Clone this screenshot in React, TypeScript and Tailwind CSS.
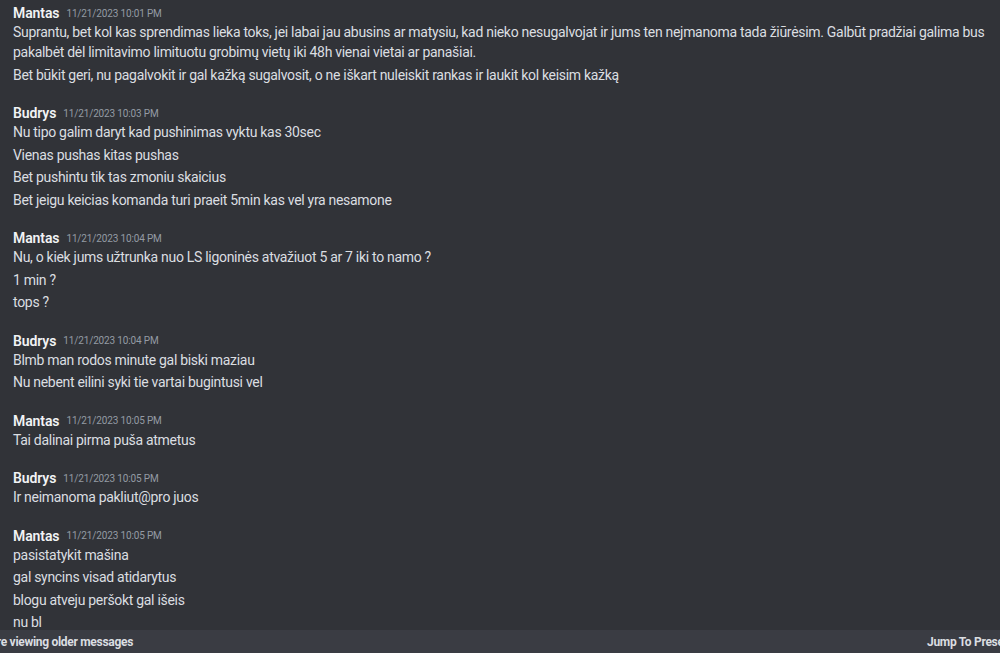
type Group = {
  author: string;
  time: string;
  lines: string[][];
};

const groups: Group[] = [
  {
    author: "Mantas",
    time: "11/21/2023 10:01 PM",
    lines: [
      [
        "Suprantu, bet kol kas sprendimas lieka toks, jei labai jau abusins ar matysiu, kad nieko nesugalvojat ir jums ten nejmanoma tada žiūrėsim. Galbūt pradžiai galima bus",
        "pakalbėt dėl limitavimo limituotu grobimų vietų iki 48h vienai vietai ar panašiai.",
      ],
      ["Bet būkit geri, nu pagalvokit ir gal kažką sugalvosit, o ne iškart nuleiskit rankas ir laukit kol keisim kažką"],
    ],
  },
  {
    author: "Budrys",
    time: "11/21/2023 10:03 PM",
    lines: [
      ["Nu tipo galim daryt kad pushinimas vyktu kas 30sec"],
      ["Vienas pushas kitas pushas"],
      ["Bet pushintu tik tas zmoniu skaicius"],
      ["Bet jeigu keicias komanda turi praeit 5min kas vel yra nesamone"],
    ],
  },
  {
    author: "Mantas",
    time: "11/21/2023 10:04 PM",
    lines: [
      ["Nu, o kiek jums užtrunka nuo LS ligoninės atvažiuot 5 ar 7 iki to namo ?"],
      ["1 min ?"],
      ["tops ?"],
    ],
  },
  {
    author: "Budrys",
    time: "11/21/2023 10:04 PM",
    lines: [["Blmb man rodos minute gal biski maziau"], ["Nu nebent eilini syki tie vartai bugintusi vel"]],
  },
  {
    author: "Mantas",
    time: "11/21/2023 10:05 PM",
    lines: [["Tai dalinai pirma puša atmetus"]],
  },
  {
    author: "Budrys",
    time: "11/21/2023 10:05 PM",
    lines: [["Ir neimanoma pakliut@pro juos"]],
  },
  {
    author: "Mantas",
    time: "11/21/2023 10:05 PM",
    lines: [
      ["pasistatykit mašina"],
      ["gal syncins visad atidarytus"],
      ["blogu atveju peršokt gal išeis"],
      ["nu bl"],
      ["kažkas sugalvosim"],
    ],
  },
];

const MessageGroup = ({ group }: { group: Group }) => {
  return (
    <div className="mb-[19px]">
      <div className="flex h-[16px] items-center gap-[7px] leading-[16px]">
        <span className="text-[14px] font-semibold tracking-[-0.1px] text-[#f2f3f5]">{group.author}</span>
        <span className="pt-[1px] text-[10px] tracking-[-0.15px] text-[#949ba4]">{group.time}</span>
      </div>
      {group.lines.map((line, i) => (
        <div key={i} className="py-[1.25px] text-[14px] leading-[20px] tracking-[-0.3px] text-[#dbdee1]">
          {line.map((row, j) => (
            <div key={j} className="whitespace-nowrap">
              {row}
            </div>
          ))}
        </div>
      ))}
    </div>
  );
};

export default function App() {
  return (
    <div
      className="relative h-[653px] w-[1000px] overflow-hidden bg-[#313338]"
      style={{ fontFamily: 'Roboto, "Noto Sans", sans-serif' }}
    >
      <div className="pl-[13px] pt-[5px]">
        {groups.map((g, i) => (
          <MessageGroup key={i} group={g} />
        ))}
      </div>
      <div className="absolute bottom-0 left-0 right-0 flex h-[23px] items-center bg-[#3a3c43] text-[12px] font-bold tracking-[-0.3px] text-[#dbdee1]">
        <div className="flex w-[133px] shrink-0 justify-end">
          <span className="whitespace-nowrap">You're viewing older messages</span>
        </div>
        <div className="ml-[794px] flex shrink-0">
          <span className="whitespace-nowrap">Jump To Present</span>
        </div>
      </div>
    </div>
  );
}
